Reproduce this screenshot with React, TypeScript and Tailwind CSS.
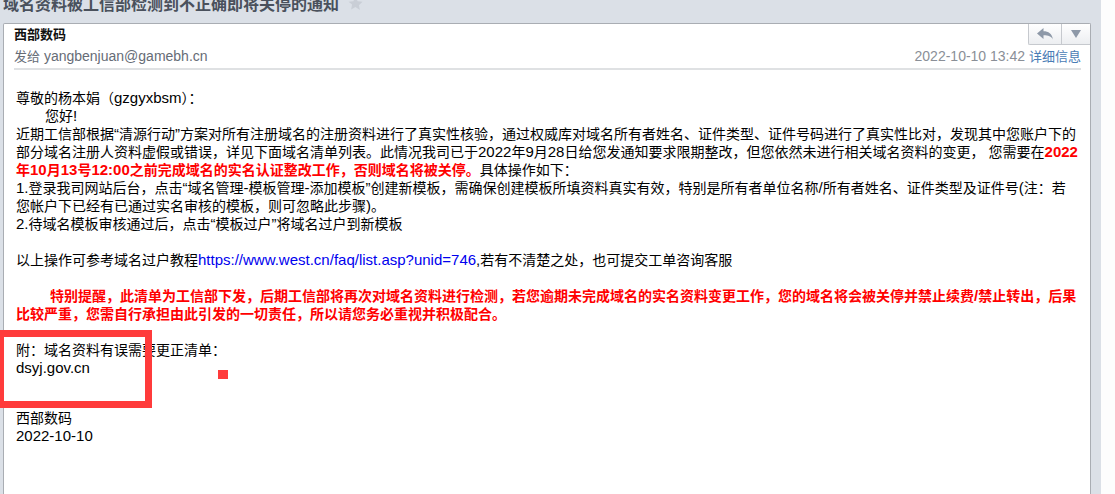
import React from 'react';

// latin runs sit 1px bigger than the cjk ones in the original mail
const Mix = ({ text, latin }: { text: string; latin: string }) => (
  <>
    {text.split(/([\x00-\x7f“”]+)/).map((part, i) =>
      i % 2 === 1 ? (
        <span key={i} className={latin}>
          {part}
        </span>
      ) : (
        part
      )
    )}
  </>
);

const Body = ({ text }: { text: string }) => <Mix text={text} latin="text-[15px]" />;

const Red = ({ text }: { text: string }) => (
  <span className="font-bold text-[#ff0000]">
    <Body text={text} />
  </span>
);

const Line = ({ children, className = '' }: { children: React.ReactNode; className?: string }) => (
  <div className={`h-[18px] ${className}`}>{children}</div>
);

const App = () => {
  return (
    <div className="relative h-[494px] w-[1115px] overflow-hidden bg-[#fdfdfd] font-['Liberation_Sans','Noto_Sans_CJK_SC',sans-serif]">
      <div className="flex h-full w-[1101px] flex-col bg-[#dbe0e7] pl-[3px] pr-[10px]">
        {/* subject */}
        <div className="flex h-[23px] shrink-0 items-start gap-[9px] overflow-hidden">
          <div className="-mt-[7px] whitespace-nowrap text-[16px] font-bold leading-[24px] text-[#4a515c]">
            域名资料被工信部检测到不正确即将关停的通知
          </div>
          <svg width="15" height="15" viewBox="0 0 24 24" className="-mt-[4px] fill-[#c9ced6]">
            <path d="M12 1l3.4 7.2 7.8 1-5.7 5.4 1.5 7.8L12 17.6l-7 3.8 1.5-7.8L.8 9.2l7.8-1z" />
          </svg>
        </div>

        {/* message panel */}
        <div className="relative flex-1 rounded-t-[2px] border border-b-0 border-[#a9adb3] bg-white pl-[10px] pr-[9px]">
          {/* reply buttons */}
          <div className="absolute right-0 top-0 flex h-[21px] w-[62px] rounded-bl-[2px] border-b border-l border-[#c6c9ce] bg-gradient-to-b from-white to-[#eceef1]">
            <div className="flex w-[33px] items-center justify-center border-r border-[#c6c9ce]">
              <svg width="16" height="12" viewBox="0 0 16 12" className="fill-[#8e99a8]">
                <path d="M0 5.5L6.5 0v3.2c5 0 8.5 2.4 9.5 8.3-1.7-3.2-4.6-4.2-9.5-4.2V11z" />
              </svg>
            </div>
            <div className="flex flex-1 items-center justify-center">
              <svg width="10" height="8" viewBox="0 0 10 8" className="fill-[#8e99a8]">
                <path d="M0 0h10L5 8z" />
              </svg>
            </div>
          </div>

          {/* header */}
          <div className="flex h-[46px] flex-col border-b-2 border-[#dfe1e3] pt-[2px]">
            <div className="h-[18px] text-[13px] font-bold leading-[18px] text-[#111]">西部数码</div>
            <div className="mt-[3px] flex h-[18px] justify-between text-[13px] leading-[18px] text-[#666c76]">
              <span>
                <Mix text="发给 yangbenjuan@gamebh.cn" latin="text-[14px]" />
              </span>
              <span className="text-[#8a8f97]">
                <span className="text-[14px]">2022-10-10 13:42 </span>
                <span className="text-[#4a7cb5]">详细信息</span>
              </span>
            </div>
          </div>

          {/* body */}
          <div className="whitespace-nowrap pl-[2px] pt-[19px] text-[14px] leading-[18px] text-black">
            <Line><Body text="尊敬的杨本娟（gzgyxbsm）：" /></Line>
            <Line className="pl-[29px]"><Body text="您好!" /></Line>
            <Line><Body text="近期工信部根据“清源行动”方案对所有注册域名的注册资料进行了真实性核验，通过权威库对域名所有者姓名、证件类型、证件号码进行了真实性比对，发现其中您账户下的" /></Line>
            <Line>
              <Body text="部分域名注册人资料虚假或错误，详见下面域名清单列表。此情况我司已于2022年9月28日给您发通知要求限期整改，但您依然未进行相关域名资料的变更， 您需要在" />
              <Red text="2022" />
            </Line>
            <Line>
              <Red text="年10月13号12:00之前完成域名的实名认证整改工作，否则域名将被关停。" />
              <Body text="具体操作如下：" />
            </Line>
            <Line><Body text="1.登录我司网站后台，点击“域名管理-模板管理-添加模板”创建新模板，需确保创建模板所填资料真实有效，特别是所有者单位名称/所有者姓名、证件类型及证件号(注：若" /></Line>
            <Line><Body text="您帐户下已经有已通过实名审核的模板，则可忽略此步骤)。" /></Line>
            <Line><Body text="2.待域名模板审核通过后，点击“模板过户”将域名过户到新模板" /></Line>
            <Line className="mt-[18px]">
              <Body text="以上操作可参考域名过户教程" />
              <span className="text-[15px] text-[#0000ee]">https://www.west.cn/faq/list.asp?unid=746</span>
              <Body text=",若有不清楚之处，也可提交工单咨询客服" />
            </Line>
            <Line className="mt-[18px] pl-[34px]">
              <Red text="特别提醒，此清单为工信部下发，后期工信部将再次对域名资料进行检测，若您逾期未完成域名的实名资料变更工作，您的域名将会被关停并禁止续费/禁止转出，后果" />
            </Line>
            <Line><Red text="比较严重，您需自行承担由此引发的一切责任，所以请您务必重视并积极配合。" /></Line>
            <Line className="mt-[18px]"><Body text="附：域名资料有误需要更正清单：" /></Line>
            <Line><Body text="dsyj.gov.cn" /></Line>
            <Line className="mt-[32px]"><Body text="西部数码" /></Line>
            <Line><Body text="2022-10-10" /></Line>
          </div>
        </div>
      </div>

      {/* red markup drawn on top of the screenshot */}
      <div className="absolute left-0 top-[330px] h-[78px] w-[152px] border-y-[7px] border-l-[4px] border-r-[7px] border-[#ff3b3b]" />
      <div className="absolute left-[218px] top-[370px] h-[9px] w-[10px] bg-[#ff3b3b]" />
    </div>
  );
};

export default App;
